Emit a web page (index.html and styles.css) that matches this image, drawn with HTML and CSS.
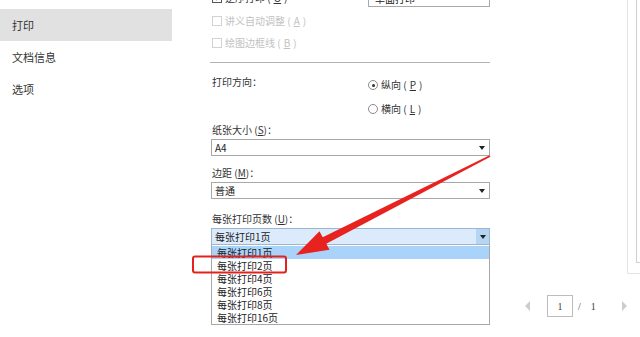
FILE: index.html
```html
<!DOCTYPE html>
<html lang="zh-CN">
<head>
<meta charset="utf-8">
<title>打印</title>
<link rel="stylesheet" href="styles.css">
</head>
<body>
<div class="app">
  <nav class="side">
    <div class="side-item active">打印</div>
    <div class="side-item">文档信息</div>
    <div class="side-item">选项</div>
  </nav>

  <main class="form">
    <div class="row-top">
      <div class="check"><span class="box checked"><svg viewBox="0 0 10 10" width="8" height="8"><path d="M2 5 L4.2 7.2 L8 2.6" fill="none" stroke="#333" stroke-width="1.4"/></svg></span>逆序打印 (<u>O</u>)</div>
      <div class="select narrow"><span>单面打印</span><span class="caret"></span></div>
    </div>
    <div class="check disabled c2"><span class="box"></span>讲义自动调整 (<u>A</u>)</div>
    <div class="check disabled c3"><span class="box"></span>绘图边框线 (<u>B</u>)</div>
    <div class="sep"></div>

    <div class="orient">
      <div class="label">打印方向：</div>
      <div class="radios">
        <div class="radio"><span class="dot on"></span>纵向 (<u>P</u>)</div>
        <div class="radio"><span class="dot"></span>横向 (<u>L</u>)</div>
      </div>
    </div>

    <div class="label l-paper">纸张大小 (<u>S</u>)：</div>
    <div class="select"><span>A4</span><span class="caret"></span></div>

    <div class="label l-margin">边距 (<u>M</u>)：</div>
    <div class="select"><span>普通</span><span class="caret"></span></div>

    <div class="label l-pages">每张打印页数 (<u>U</u>)：</div>
    <div class="select open"><span>每张打印1页</span><span class="btn"><span class="caret"></span></span></div>
    <ul class="list">
      <li class="hl">每张打印1页</li>
      <li>每张打印2页</li>
      <li>每张打印4页</li>
      <li>每张打印6页</li>
      <li>每张打印8页</li>
      <li>每张打印16页</li>
    </ul>
  </main>

  <aside class="right">
    <div class="preview"><div class="page"></div></div>
    <div class="nav">
      <span class="tri-left"></span>
      <span class="pagebox">1</span>
      <span class="slash">/</span>
      <span class="total">1</span>
      <span class="tri-right"></span>
    </div>
  </aside>
</div>

<svg class="overlay" width="640" height="337" viewBox="0 0 640 337">
  <polygon fill="#e8231f" points="296,255 329.5,249.8 326.3,243.8 490.4,156.8 489.6,155.2 322.7,237.2 319.5,231.2"/>
  <rect x="193" y="256.5" width="93" height="16" rx="2" ry="2" fill="none" stroke="#e3221d" stroke-width="2"/>
</svg>
</body>
</html>
```

FILE: styles.css
```css
* { box-sizing: border-box; margin: 0; padding: 0; }

body {
  width: 640px;
  height: 337px;
  overflow: hidden;
  background: #fff;
  font-family: "Noto Sans CJK SC", "Noto Sans", sans-serif;
  color: #333;
  position: relative;
}

.app { display: flex; height: 337px; }

/* sidebar */
.side { width: 172px; flex: none; padding-top: 9px; }
.side-item {
  height: 32px;
  line-height: 32px;
  padding-left: 12px;
  font-size: 11px;
  color: #333;
}
.side-item.active { background: #e1e1e1; }

/* form */
.form {
  width: 279px;
  flex: none;
  margin-left: 39px;
  margin-top: -11px;
  font-size: 10px;
}
u { text-decoration: underline; }

.row-top {
  display: flex;
  justify-content: space-between;
  align-items: center;
  height: 18px;
}

.check {
  display: flex;
  align-items: center;
  height: 14px;
  line-height: 14px;
  gap: 3px;
  padding-left: 1px;
  color: #333;
}
.check.disabled { color: #c2c2c2; }
.c2 { margin-top: 7px; }
.c3 { margin-top: 8px; }

.box {
  width: 10px;
  height: 10px;
  border: 1px solid #d3d3d3;
  background: #fff;
  display: flex;
  align-items: center;
  justify-content: center;
  flex: none;
}
.box.checked { border-color: #555; }

.sep {
  margin-top: 12px;
  height: 1px;
  background: #b2b2b2;
  margin-left: -1px;
}

.orient {
  display: grid;
  grid-template-columns: 157px 1fr;
  margin-top: 12px;
}
.label { height: 14px; line-height: 14px; padding-left: 1px; color: #333; }
.radios { display: flex; flex-direction: column; gap: 10px; padding-top: 3px; }
.radio {
  display: flex;
  align-items: center;
  gap: 3px;
  height: 14px;
  line-height: 14px;
  color: #333;
}
.dot {
  width: 10px;
  height: 10px;
  border: 1px solid #8a8a8a;
  border-radius: 50%;
  display: flex;
  align-items: center;
  justify-content: center;
  flex: none;
}
.dot.on::after {
  content: "";
  width: 3px;
  height: 3px;
  border-radius: 50%;
  background: #333;
}

.l-paper { margin-top: 7px; }
.l-margin { margin-top: 10px; }
.l-pages { margin-top: 13px; }

.select {
  margin-top: 2px;
  height: 17px;
  border: 1px solid #a8a8a8;
  background: #fff;
  display: flex;
  align-items: center;
  justify-content: space-between;
  padding: 0 3px 0 3px;
  line-height: 15px;
  color: #222;
}
.select.narrow { width: 122px; margin-top: 0; padding-left: 6px; }
.caret {
  width: 0;
  height: 0;
  border-left: 3.5px solid transparent;
  border-right: 3.5px solid transparent;
  border-top: 4px solid #222;
  margin-right: 1px;
}
.select.open {
  background: #dcebfb;
  border-color: #9cb6d0;
  padding-right: 0;
}
.btn {
  width: 13px;
  height: 15px;
  background: #b5d5f3;
  display: flex;
  align-items: center;
  justify-content: center;
}
.btn .caret { margin-right: 0; }

.list {
  list-style: none;
  height: 80px;
  border: 1px solid #a8a8a8;
  border-top: none;
  background: #fff;
  padding-top: 1px;
}
.list li {
  height: 13px;
  line-height: 13px;
  padding-left: 5px;
  color: #222;
}
.list li.hl { background: #a9d3f8; }

/* right area */
.right { flex: 1; display: flex; flex-direction: column; }
.preview {
  margin-left: 137px;
  height: 274px;
  border-left: 1px solid #e3e3e3;
  border-bottom: 1px solid #e3e3e3;
  padding-left: 8px;
}
.page {
  height: 263px;
  border-left: 1px solid #cfcfcf;
  border-bottom: 1px solid #cfcfcf;
}

.nav {
  margin-top: 21px;
  display: flex;
  align-items: center;
  height: 22px;
  padding-left: 35px;
  font-size: 10px;
  color: #444;
}
.tri-left {
  width: 0; height: 0;
  border-top: 5px solid transparent;
  border-bottom: 5px solid transparent;
  border-right: 5px solid #cdcdcd;
}
.pagebox {
  margin-left: 17px;
  width: 26px;
  height: 22px;
  border: 1px solid #bdbdbd;
  display: flex;
  align-items: center;
  justify-content: center;
  font-family: "Liberation Serif", serif;
}
.slash { margin-left: 5px; font-family: "Liberation Serif", serif; }
.total { margin-left: 10px; font-family: "Liberation Serif", serif; }
.tri-right {
  margin-left: 26px;
  width: 0; height: 0;
  border-top: 5px solid transparent;
  border-bottom: 5px solid transparent;
  border-left: 5px solid #cdcdcd;
}

.overlay { position: absolute; left: 0; top: 0; pointer-events: none; }
```
